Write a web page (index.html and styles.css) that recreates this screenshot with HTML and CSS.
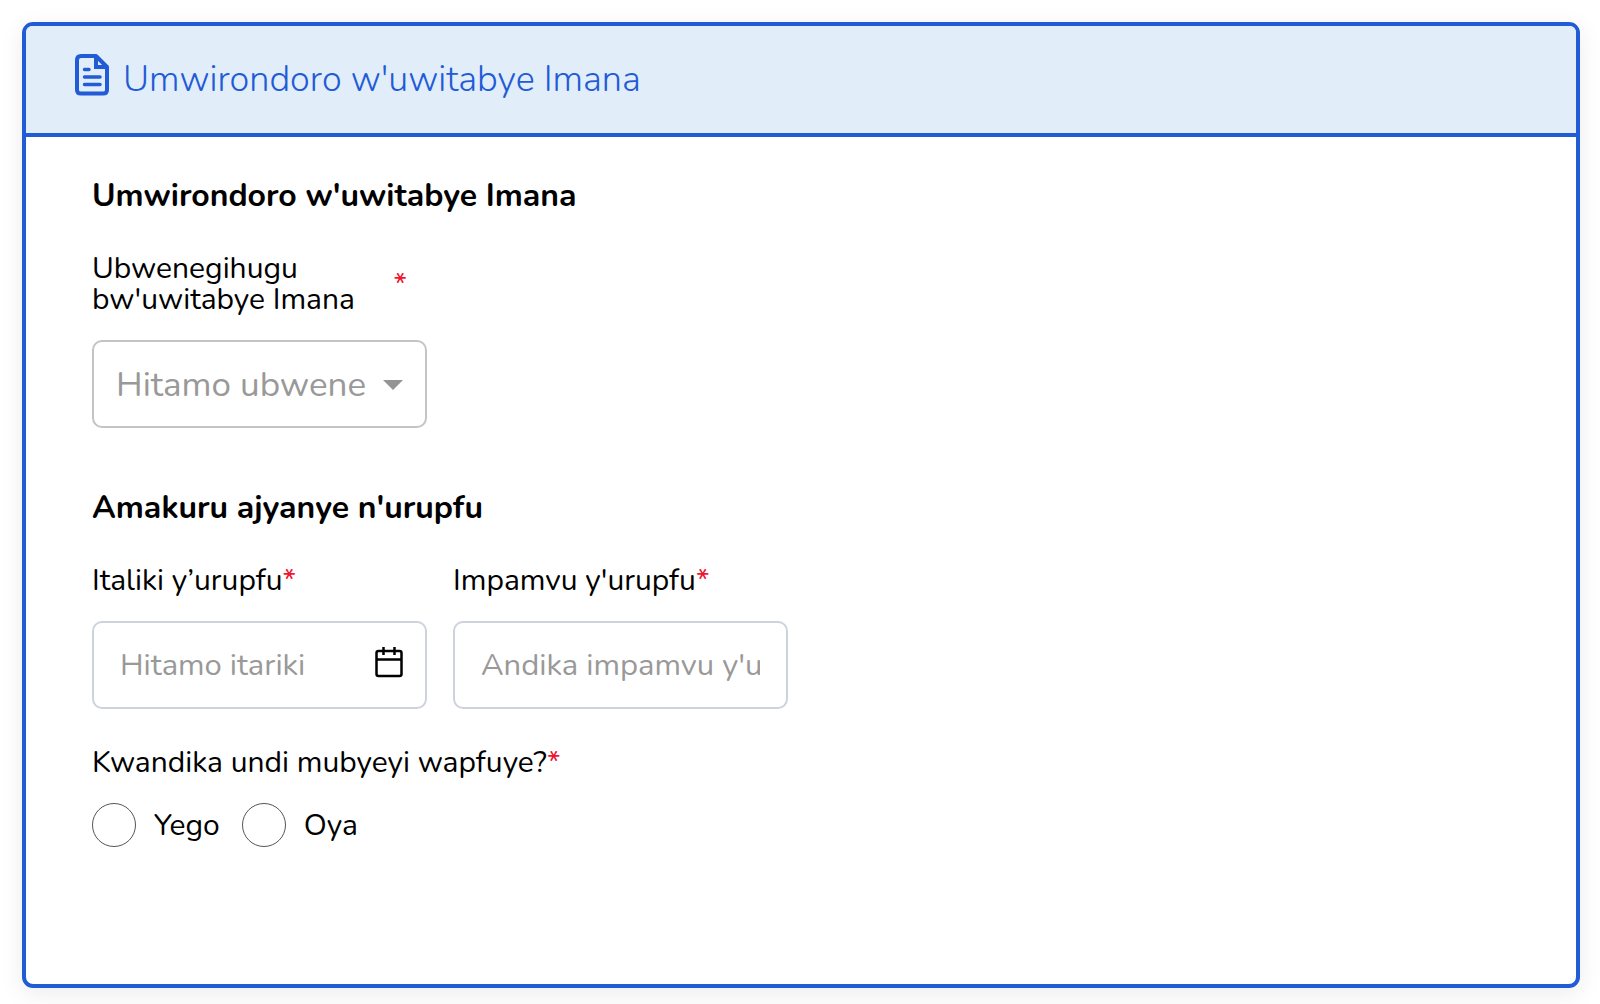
FILE: index.html
```
<!DOCTYPE html>
<html lang="rw">
<head>
<meta charset="utf-8">
<title>Umwirondoro w'uwitabye Imana</title>
<link rel="stylesheet" href="styles.css">
</head>
<body>
    <form class="card">
        <div class="cardHeader">
            <svg class="fileIcon" viewBox="0 0 34 42" fill="none" stroke="currentColor" stroke-width="4" stroke-linejoin="round" stroke-linecap="round">
                <path d="M6 2H21L32 13V36Q32 39.500 28 39.500H6Q2 39.500 2 36V6Q2 2 6 2Z"/>
                <path d="M21 3V13H31" stroke-linejoin="miter"/>
                <path d="M9.500 15.500H14M9.500 23H25M9.500 30.500H25" stroke-width="3.500"/>
            </svg>
            <h1 class="cardTitle">Umwirondoro w'uwitabye Imana</h1>
        </div>

        <div class="cardBody">
            <h2 class="sectionTitle">Umwirondoro w'uwitabye Imana</h2>
            <div class="fields">
                <div class="field">
                    <label class="label spread" for="nationality">
                        <span>Ubwenegihugu bw'uwitabye Imana</span>
                        <span class="required">*</span>
                    </label>
                    <div class="control">
                        <select class="box select" id="nationality">
                            <option>Hitamo ubwene</option>
                        </select>
                        <svg class="arrow" viewBox="0 0 20 10"><path d="M0 0H20L10 10Z" fill="currentColor"/></svg>
                    </div>
                </div>
            </div>

            <h2 class="sectionTitle">Amakuru ajyanye n'urupfu</h2>
            <div class="fields">
                <div class="field">
                    <label class="label" for="deathDate">Italiki y’urupfu<span class="required">*</span></label>
                    <div class="control">
                        <input class="box" id="deathDate" type="text" placeholder="Hitamo itariki">
                        <button class="calendar" type="button" aria-label="Hitamo itariki">
                            <svg class="calendarIcon" viewBox="0 0 28 31" fill="none" stroke="currentColor" stroke-width="2.500">
                                <rect x="1.500" y="4" width="25" height="25" rx="2"/>
                                <path d="M1 12.500H27M8.500 0V8M19.500 0V8"/>
                            </svg>
                        </button>
                    </div>
                </div>
                <div class="field">
                    <label class="label" for="deathCause">Impamvu y'urupfu<span class="required">*</span></label>
                    <input class="box" id="deathCause" type="text" placeholder="Andika impamvu y'u">
                </div>
            </div>

            <fieldset class="choices">
                <legend class="label">Kwandika undi mubyeyi wapfuye?<span class="required">*</span></legend>
                <div class="options">
                    <label class="option"><input class="radio" type="radio" name="otherParent" value="yego">Yego</label>
                    <label class="option"><input class="radio" type="radio" name="otherParent" value="oya">Oya</label>
                </div>
            </fieldset>
        </div>
    </form>
</body>
</html>
```
FILE: styles.css
```
* {box-sizing: border-box;}
body {
    margin: 0;
    padding: 22px 20px 16px 22px;
    min-height: 100vh;
    display: flex;
    background-color: white;
    color: black;
    font-family: Nunito, Lato, sans-serif;}
.card {
    flex: 1;
    border: 4px solid #215bd6;
    border-radius: 11px;
    box-shadow: 0 6px 24px rgba(0, 0, 0, 0.08);
    background-color: white;}
.cardHeader {
    display: flex;
    align-items: flex-start;
    gap: 14px;
    padding: 28px 49px 27px;
    border-bottom: 4px solid #215bd6;
    border-radius: 6px 6px 0 0;
    background-color: #e1edf9;
    color: #215bd6;}
.fileIcon {width: 34px; height: 42px;}
.cardTitle {
    margin: 0;
    font-size: 36px;
    font-weight: 300;
    line-height: 52px;}
.cardBody {padding: 39px 66px;}
.sectionTitle {
    margin: 0 0 37px;
    font-size: 32px;
    font-weight: 700;
    line-height: 40px;}
.fields {
    display: flex;
    flex-wrap: wrap;
    gap: 26px;
    margin-bottom: 60px;}
.field {
    display: flex;
    flex-direction: column;
    gap: 25px;
    width: 335px;}
.label {
    padding: 0;
    font-size: 30px;
    line-height: 31px;}
.spread {
    display: flex;
    align-items: center;
    justify-content: space-between;
    padding-right: 20px;}
.required {color: #f0142f;}
.control {position: relative;}
.box {
    display: block;
    width: 100%;
    height: 88px;
    padding: 0 26px;
    border: 2px solid #ced2dc;
    border-radius: 10px;
    background-color: white;
    color: black;
    font-family: inherit;
    font-size: 31px;}
.box::placeholder {color: #999;}
.select {
    appearance: none;
    padding: 0 54px 0 22px;
    border-color: #c4c4c4;
    color: #999;
    font-size: 35px;}
.arrow {
    position: absolute;
    right: 24px;
    top: 40px;
    width: 20px;
    height: 10px;
    color: #949494;
    pointer-events: none;}
.calendar {
    position: absolute;
    right: 24px;
    top: 26px;
    padding: 0;
    border: none;
    background: none;
    color: black;}
.calendarIcon {display: block; width: 28px; height: 31px;}
.choices {
    margin: -22px 0 0;
    padding: 0;
    border: none;}
.options {
    display: flex;
    gap: 22px;
    margin-top: 25px;}
.option {
    display: flex;
    align-items: center;
    gap: 18px;
    font-size: 30px;}
.radio {
    appearance: none;
    width: 44px;
    height: 44px;
    margin: 0;
    border: 1px solid #555;
    border-radius: 50%;}
```
